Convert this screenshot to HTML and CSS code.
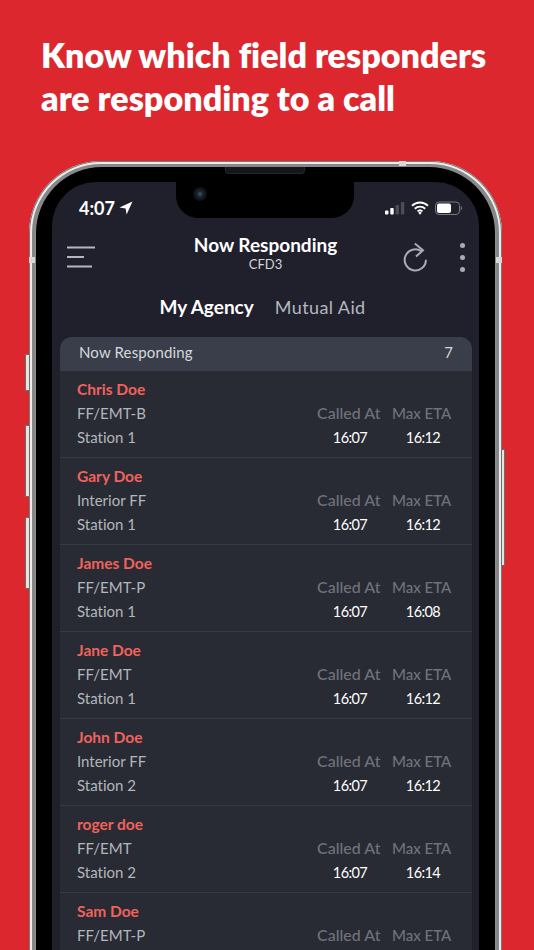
FILE: index.html
```html
<!DOCTYPE html>
<html lang="en">
<head>
<meta charset="utf-8">
<title>Now Responding</title>
<link rel="stylesheet" href="styles.css">
</head>
<body>
<main class="page">
  <h1 class="headline">Know which field responders<br>are responding to a call</h1>
  <div class="phone">
    <span class="btn btn-mute"></span>
    <span class="btn btn-up"></span>
    <span class="btn btn-down"></span>
    <span class="btn btn-power"></span>
    <span class="band band-left"></span>
    <span class="band band-right"></span>
    <span class="band band-top"></span>
    <div class="bezel">
      <span class="speaker"></span>
      <div class="screen">
        <div class="notch">
          <span class="camera"></span>
        </div>
        <div class="status">
          <div class="clock">4:07
            <svg class="loc" viewBox="0 0 14 14" width="14" height="14"><path d="M13.5 0.5 L0.5 6.4 L6.6 7.4 L7.6 13.5 Z" fill="#fff"/></svg>
          </div>
          <div class="status-icons">
            <svg width="20" height="14" viewBox="0 0 20 14"><rect x="0" y="9.500" width="3.400" height="4" rx=".8" fill="#fff"/><rect x="5.300" y="7" width="3.400" height="6.500" rx=".8" fill="#fff"/><rect x="10.600" y="4" width="3.400" height="9.500" rx=".8" fill="#4b4d55"/><rect x="15.900" y="1" width="3.400" height="12.500" rx=".8" fill="#4b4d55"/></svg>
            <svg width="18" height="14" viewBox="0 0 18 14"><path d="M1 4.800a11.500 11.500 0 0 1 16 0M3.800 7.700a7.500 7.500 0 0 1 10.400 0M6.500 10.400a3.600 3.600 0 0 1 5 0" fill="none" stroke="#fff" stroke-width="1.900"/><path d="M9 13.700l-1.700-2a2.400 2.400 0 0 1 3.400 0z" fill="#fff"/></svg>
            <svg width="27" height="14" viewBox="0 0 27 14"><rect x=".5" y="1" width="24" height="12.500" rx="3.500" fill="none" stroke="#777a80"/><rect x="2" y="2.500" width="14" height="9.500" rx="2" fill="#fff"/><path d="M25.800 5v4.500c.8-.3 1.200-1.200 1.200-2.200s-.4-2-1.200-2.300z" fill="#777a80"/></svg>
          </div>
        </div>
        <header class="toolbar">
          <svg class="menu" width="28" height="22" viewBox="0 0 28 22"><path d="M0 1.500H28M0 11H17M0 20.500H25" stroke="#b4b7bf" stroke-width="2" fill="none"/></svg>
          <div class="title">
            <div class="title-main">Now Responding</div>
            <div class="title-sub">CFD3</div>
          </div>
          <svg class="refresh" width="26" height="30" viewBox="0 0 26 30"><path d="M19.500 9.300A10.600 10.600 0 1 0 23.900 17.800" fill="none" stroke="#a9acb4" stroke-width="2"/><path d="M12.800 1.500L21 8.300L14 14.500" fill="none" stroke="#a9acb4" stroke-width="2"/></svg>
          <div class="dots"><i></i><i></i><i></i></div>
        </header>
        <nav class="tabs">
          <span class="tab tab-active">My Agency</span>
          <span class="tab">Mutual Aid</span>
        </nav>
        <section class="card">
          <div class="card-head"><span>Now Responding</span><span>7</span></div>
          <article class="row">
            <div class="who"><div class="name">Chris Doe</div><div class="line">FF/EMT-B</div><div class="line">Station 1</div></div>
            <div class="col col-called"><div class="lbl">Called At</div><div class="time">16:07</div></div>
            <div class="col col-eta"><div class="lbl">Max ETA</div><div class="time">16:12</div></div>
          </article>
          <article class="row">
            <div class="who"><div class="name">Gary Doe</div><div class="line">Interior FF</div><div class="line">Station 1</div></div>
            <div class="col col-called"><div class="lbl">Called At</div><div class="time">16:07</div></div>
            <div class="col col-eta"><div class="lbl">Max ETA</div><div class="time">16:12</div></div>
          </article>
          <article class="row">
            <div class="who"><div class="name">James Doe</div><div class="line">FF/EMT-P</div><div class="line">Station 1</div></div>
            <div class="col col-called"><div class="lbl">Called At</div><div class="time">16:07</div></div>
            <div class="col col-eta"><div class="lbl">Max ETA</div><div class="time">16:08</div></div>
          </article>
          <article class="row">
            <div class="who"><div class="name">Jane Doe</div><div class="line">FF/EMT</div><div class="line">Station 1</div></div>
            <div class="col col-called"><div class="lbl">Called At</div><div class="time">16:07</div></div>
            <div class="col col-eta"><div class="lbl">Max ETA</div><div class="time">16:12</div></div>
          </article>
          <article class="row">
            <div class="who"><div class="name">John Doe</div><div class="line">Interior FF</div><div class="line">Station 2</div></div>
            <div class="col col-called"><div class="lbl">Called At</div><div class="time">16:07</div></div>
            <div class="col col-eta"><div class="lbl">Max ETA</div><div class="time">16:12</div></div>
          </article>
          <article class="row">
            <div class="who"><div class="name">roger doe</div><div class="line">FF/EMT</div><div class="line">Station 2</div></div>
            <div class="col col-called"><div class="lbl">Called At</div><div class="time">16:07</div></div>
            <div class="col col-eta"><div class="lbl">Max ETA</div><div class="time">16:14</div></div>
          </article>
          <article class="row">
            <div class="who"><div class="name">Sam Doe</div><div class="line">FF/EMT-P</div></div>
            <div class="col col-called"><div class="lbl">Called At</div></div>
            <div class="col col-eta"><div class="lbl">Max ETA</div></div>
          </article>
        </section>
      </div>
    </div>
  </div>
</main>
</body>
</html>
```

FILE: styles.css
```css
html, body {
  margin: 0;
  height: 950px;
  overflow: hidden;
  background: #dc272e;
}
.page {
  height: 950px;
  overflow: hidden;
  font-family: Lato, "Noto Sans", sans-serif;
  font-variant-ligatures: none;
}
.headline {
  margin: 0;
  padding: 33px 0 0 41px;
  height: 161px;
  box-sizing: border-box;
  color: #fff;
  font-size: 34.100px;
  line-height: 43px;
  font-weight: 800;
  white-space: nowrap;
}
.phone {
  position: relative;
  margin-left: 29px;
  width: 473px;
  height: 1000px;
  box-sizing: border-box;
  padding: 6px 7px 0;
  border-radius: 72px 72px 0 0;
  background: #8d8d8a;
  box-shadow: inset 0 0 0 1px #77787a, inset 0 0 0 3px #ecece8, inset 0 0 0 6px #86878a;
}
.btn {
  position: absolute;
  width: 5px;
  background: #e4e4e1;
  border: 1px solid #6c6c6c;
  box-sizing: border-box;
  border-radius: 1px;
}
.btn-mute { left: -4px; top: 193px; height: 37px; }
.btn-up { left: -4px; top: 264px; height: 72px; }
.btn-down { left: -4px; top: 356px; height: 72px; }
.btn-power { right: -3px; width: 4px; top: 288px; height: 117px; }
.band {
  position: absolute;
  background: #d8d8d6;
}
.band-left { left: 0; top: 96px; width: 6px; height: 6px; }
.band-right { right: 0; top: 96px; width: 6px; height: 6px; }
.band-top { left: 370px; top: 0; width: 7px; height: 5px; }
.bezel {
  position: relative;
  height: 100%;
  box-sizing: border-box;
  padding: 15px 16px 0;
  border-radius: 66px 66px 0 0;
  background: #000;
}
.screen {
  position: relative;
  height: 100%;
  border-radius: 44px 44px 0 0;
  background: #1f202b;
  overflow: hidden;
  color: #fff;
}
.notch {
  position: absolute;
  left: 124px;
  top: 0;
  width: 178px;
  height: 36px;
  background: #000;
  border-radius: 0 0 22px 22px;
}
.speaker {
  position: absolute;
  left: 189px;
  top: 0;
  width: 80px;
  height: 7px;
  border-radius: 0 0 4px 4px;
  background: #15151a;
  border: 1px solid #26262b;
  border-top: 0;
  box-sizing: border-box;
}
.camera {
  position: absolute;
  left: 17px;
  top: 5px;
  width: 14px;
  height: 14px;
  border-radius: 50%;
  background: radial-gradient(circle, #3f6474 0, #1c2a33 25%, #0e1116 60%);
}
.status {
  display: flex;
  justify-content: space-between;
  align-items: center;
  height: 50px;
  padding: 0 17px 0 27px;
  box-sizing: border-box;
}
.clock {
  display: flex;
  align-items: center;
  gap: 4px;
  font-size: 18px;
  font-weight: 700;
  padding-top: 1px;
}
.loc { margin-top: 1px; }
.status-icons {
  display: flex;
  align-items: center;
  gap: 6px;
  padding-top: 1px;
}
.toolbar {
  position: relative;
  display: flex;
  align-items: center;
  height: 50px;
  padding: 0 15px;
}
.menu { flex: none; }
.title {
  position: absolute;
  left: 0;
  right: 0;
  top: 2px;
  text-align: center;
}
.title-main {
  font-size: 19px;
  line-height: 22px;
  font-weight: 700;
}
.title-sub {
  font-size: 13px;
  line-height: 16px;
  color: #d4d6da;
}
.refresh { flex: none; margin-left: auto; }
.dots {
  flex: none;
  display: flex;
  flex-direction: column;
  gap: 7px;
  margin-left: 32px;
  margin-right: -1px;
}
.dots i {
  display: block;
  width: 5px;
  height: 5px;
  border-radius: 50%;
  background: #a9acb4;
}
.tabs {
  display: flex;
  justify-content: center;
  gap: 21px;
  height: 55px;
  box-sizing: border-box;
  padding: 0 6px 6px 0;
  align-items: center;
  font-size: 18px;
}
.tab { color: #b4b7bf; letter-spacing: .4px; }
.tab-active { color: #fff; font-weight: 700; font-size: 19px; letter-spacing: 0; }
.card {
  margin: 0 7px 0 8px;
  border-radius: 12px 12px 0 0;
  overflow: hidden;
  background: #282b33;
}
.card-head {
  display: flex;
  justify-content: space-between;
  align-items: center;
  height: 34px;
  box-sizing: border-box;
  padding: 0 19px 4px;
  background: #3a3e4a;
  font-size: 15px;
  letter-spacing: .15px;
  color: #d6d8dc;
}
.row {
  display: flex;
  height: 87px;
  box-sizing: border-box;
  padding: 6px 21px 0 17px;
  border-bottom: 1px solid #373a44;
  font-size: 15px;
  line-height: 24px;
}
.who { flex: 1; }
.name { color: #f0625c; font-weight: 700; font-size: 15.500px; }
.line { color: #b3b6bc; }
.col {
  padding-top: 24px;
  text-align: center;
}
.col-called { width: 63px; }
.col-eta { width: 59px; margin-left: 12px; }
.lbl { color: #6f727e; white-space: nowrap; font-weight: 500; }
.col-called .lbl { font-size: 16px; }
.time { color: #fff; font-size: 14.500px; line-height: 25px; letter-spacing: -.6px; padding-left: 3px; }
```
